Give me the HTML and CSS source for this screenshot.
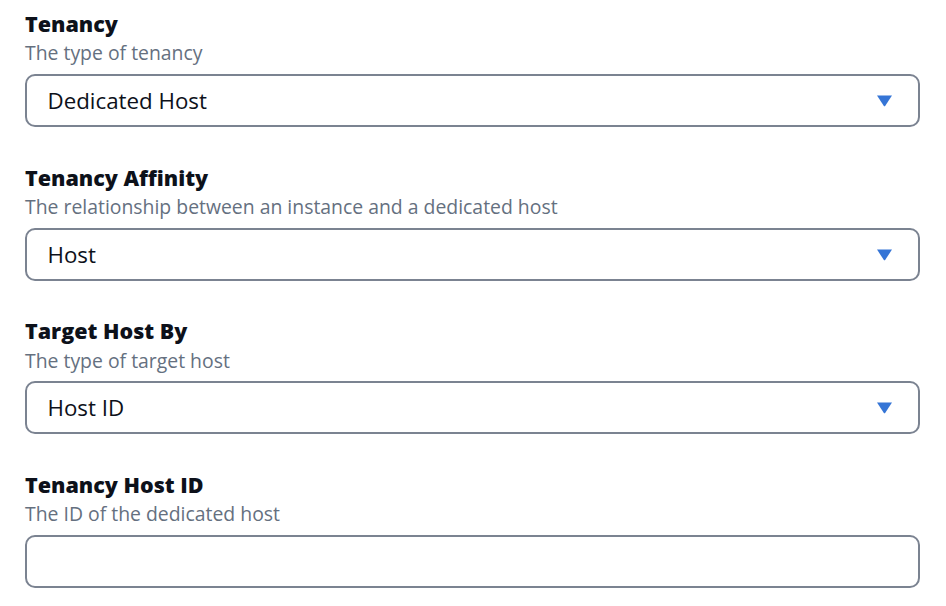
FILE: index.html
```html
<!DOCTYPE html>
<html lang="en">
<head>
<meta charset="utf-8">
<title>Tenancy settings</title>
<link rel="stylesheet" href="styles.css">
</head>
<body>
<form class="form">
  <div class="field">
    <label class="field-label">Tenancy</label>
    <div class="field-desc">The type of tenancy</div>
    <div class="select">
      <span class="select-value">Dedicated Host</span>
      <svg class="caret" width="17" height="13" viewBox="0 0 17 13"><path d="M1 1.5 H16 L9.3 11.8 Q8.5 12.8 7.7 11.8 Z" fill="#3575d6"/></svg>
    </div>
  </div>
  <div class="field">
    <label class="field-label">Tenancy Affinity</label>
    <div class="field-desc">The relationship between an instance and a dedicated host</div>
    <div class="select">
      <span class="select-value">Host</span>
      <svg class="caret" width="17" height="13" viewBox="0 0 17 13"><path d="M1 1.5 H16 L9.3 11.8 Q8.5 12.8 7.7 11.8 Z" fill="#3575d6"/></svg>
    </div>
  </div>
  <div class="field">
    <label class="field-label">Target Host By</label>
    <div class="field-desc">The type of target host</div>
    <div class="select">
      <span class="select-value">Host ID</span>
      <svg class="caret" width="17" height="13" viewBox="0 0 17 13"><path d="M1 1.5 H16 L9.3 11.8 Q8.5 12.8 7.7 11.8 Z" fill="#3575d6"/></svg>
    </div>
  </div>
  <div class="field">
    <label class="field-label">Tenancy Host ID</label>
    <div class="field-desc">The ID of the dedicated host</div>
    <div class="input"></div>
  </div>
</form>
</body>
</html>
```
FILE: styles.css
```css
html, body {
  margin: 0;
  padding: 0;
  background: #ffffff;
}
body {
  font-family: "Open Sans", "Noto Sans", sans-serif;
}
.form {
  display: flex;
  flex-direction: column;
  padding: 10px 26px 0 25px;
}
.field {
  display: flex;
  flex-direction: column;
  margin-bottom: 36.7px;
}
.field-label {
  font-size: 21.5px;
  line-height: 28px;
  font-weight: 800;
  color: #0d111a;
}
.field-desc {
  margin-top: 2.4px;
  font-size: 19.4px;
  line-height: 26px;
  color: #65707f;
}
.select, .input {
  margin-top: 7.6px;
  box-sizing: border-box;
  height: 53px;
  border: 2.5px solid #7b8391;
  border-radius: 10px;
  display: flex;
  align-items: center;
  justify-content: space-between;
  padding: 0 25px 0 20.5px;
}
.select-value {
  font-size: 22.3px;
  color: #0d111a;
}
.caret {
  display: block;
}
```
